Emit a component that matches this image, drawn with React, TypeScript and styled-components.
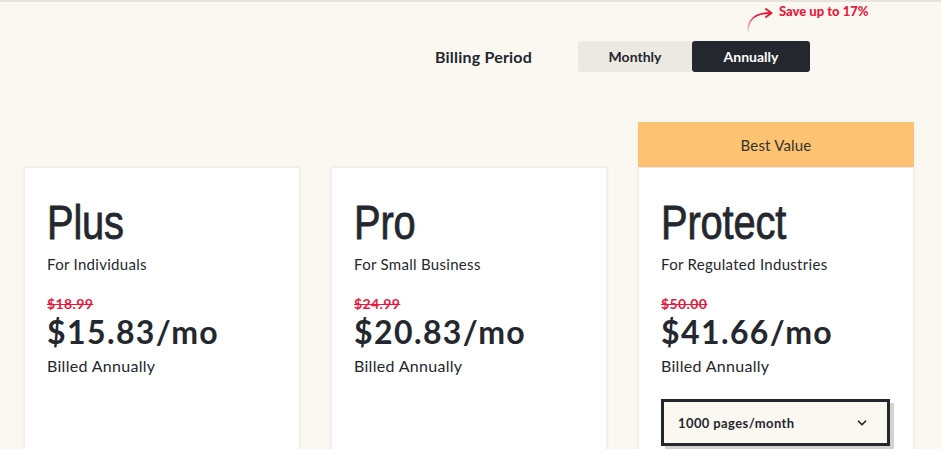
import React from 'react';
import styled, { createGlobalStyle } from 'styled-components';
import { ChevronDown } from 'lucide-react';

const GlobalStyle = createGlobalStyle`
  html, body {
    margin: 0;
    padding: 0;
    background: #fbf8f2;
  }
  body {
    font-family: Lato, "Noto Sans", sans-serif;
    color: #24272e;
  }
`;

const Page = styled.div`
  min-height: 449px;
  box-sizing: border-box;
  border-top: 2px solid #e6e3dd;
  padding: 39px 27px 0 24px;
  overflow: hidden;
`;

const Header = styled.div`
  display: flex;
  justify-content: flex-end;
  align-items: center;
  gap: 46px;
  padding-right: 104px;
`;

const Label = styled.span`
  font-size: 16px;
  font-weight: 700;
  letter-spacing: 0.2px;
`;

const Toggle = styled.div`
  position: relative;
  display: flex;
  height: 31px;
`;

const ToggleButton = styled.button<{ $active?: boolean; $width: number }>`
  width: ${p => p.$width}px;
  height: 31px;
  border: none;
  border-radius: 3px;
  font-family: Lato, sans-serif;
  font-size: 14px;
  font-weight: 700;
  background: ${p => (p.$active ? '#24272e' : '#ece8e2')};
  color: ${p => (p.$active ? '#ffffff' : '#24272e')};
  cursor: pointer;
`;

const SaveNote = styled.div`
  position: absolute;
  left: 168px;
  top: -37px;
  display: flex;
  align-items: flex-start;
  gap: 3px;
  color: #e8193c;
  font-size: 13px;
  font-weight: 900;
  line-height: 14px;
  white-space: nowrap;
`;

const Plans = styled.div`
  display: grid;
  grid-template-columns: repeat(3, 276px);
  gap: 31px;
  margin-top: 50px;
  align-items: start;
`;

const Column = styled.div<{ $offset?: boolean }>`
  margin-top: ${p => (p.$offset ? '45px' : '0')};
  display: flex;
  flex-direction: column;
`;

const Banner = styled.div`
  height: 45px;
  background: #fdc272;
  display: flex;
  align-items: center;
  justify-content: center;
  font-size: 15px;
  color: #33322f;
  letter-spacing: 0.2px;
`;

const Card = styled.div`
  background: #ffffff;
  border: 1px solid #f0ece5;
  box-shadow: 0 0 4px rgba(0, 0, 0, 0.06);
  padding: 29px 22px 0;
  height: 320px;
`;

const Title = styled.h2`
  margin: 0;
  display: inline-block;
  font-family: "Liberation Sans", Arial, sans-serif;
  font-weight: 400;
  font-size: 48px;
  line-height: 52px;
  letter-spacing: -0.2px;
  -webkit-text-stroke: 0.8px #24272e;
  transform: scaleX(0.83);
  transform-origin: left center;
`;

const Subtitle = styled.p`
  margin: 5px 0 0;
  font-size: 15px;
  line-height: 20px;
  letter-spacing: 0.3px;
`;

const OldPrice = styled.div`
  margin-top: 22px;
  font-size: 14px;
  font-weight: 700;
  line-height: 16px;
  color: #e8193c;
  text-decoration: line-through;
  letter-spacing: 0.4px;
`;

const Price = styled.div`
  font-size: 32px;
  font-weight: 700;
  line-height: 34px;
  letter-spacing: 1.4px;
  margin-top: 3px;
`;

const Billed = styled.div`
  font-size: 16px;
  line-height: 20px;
  margin-top: 7px;
  letter-spacing: 0.3px;
`;

const Select = styled.div`
  margin-top: 23px;
  width: 229px;
  height: 47px;
  box-sizing: border-box;
  border: 3px solid #24272e;
  background: #fbf8f2;
  box-shadow: 4px 4px 0 #d4d2ce;
  display: flex;
  align-items: center;
  justify-content: space-between;
  padding: 0 18px 0 14px;
  font-size: 13px;
  font-weight: 700;
  letter-spacing: 0.4px;
`;

type Plan = {
  name: string;
  audience: string;
  was: string;
  now: string;
  banner?: string;
  select?: string;
};

const plans: Plan[] = [
  { name: 'Plus', audience: 'For Individuals', was: '$18.99', now: '$15.83/mo' },
  { name: 'Pro', audience: 'For Small Business', was: '$24.99', now: '$20.83/mo' },
  {
    name: 'Protect',
    audience: 'For Regulated Industries',
    was: '$50.00',
    now: '$41.66/mo',
    banner: 'Best Value',
    select: '1000 pages/month',
  },
];

const CurvedArrow = () => (
  <svg width="30" height="28" viewBox="0 0 30 28" fill="none">
    <defs>
      <linearGradient id="tail" x1="0" y1="1" x2="1" y2="0">
        <stop offset="0" stopColor="#e8193c" stopOpacity="0.15" />
        <stop offset="0.6" stopColor="#e8193c" stopOpacity="1" />
      </linearGradient>
    </defs>
    <path d="M2 27 C2 16 9 9 24 9" stroke="url(#tail)" strokeWidth="1.8" strokeLinecap="round" />
    <path d="M20 5 L25.5 9 L20 13" stroke="#e8193c" strokeWidth="2" strokeLinecap="round" strokeLinejoin="round" />
  </svg>
);

export default function App() {
  return (
    <>
      <GlobalStyle />
      <Page>
        <Header>
          <Label>Billing Period</Label>
          <Toggle>
            <ToggleButton $width={114}>Monthly</ToggleButton>
            <ToggleButton $width={118} $active>
              Annually
            </ToggleButton>
            <SaveNote>
              <CurvedArrow />
              <span>Save up to 17%</span>
            </SaveNote>
          </Toggle>
        </Header>
        <Plans>
          {plans.map(plan => (
            <Column key={plan.name} $offset={!plan.banner}>
              {plan.banner && <Banner>{plan.banner}</Banner>}
              <Card>
                <Title>{plan.name}</Title>
                <Subtitle>{plan.audience}</Subtitle>
                <OldPrice>{plan.was}</OldPrice>
                <Price>{plan.now}</Price>
                <Billed>Billed Annually</Billed>
                {plan.select && (
                  <Select>
                    <span>{plan.select}</span>
                    <ChevronDown size={14} strokeWidth={3} />
                  </Select>
                )}
              </Card>
            </Column>
          ))}
        </Plans>
      </Page>
    </>
  );
}
